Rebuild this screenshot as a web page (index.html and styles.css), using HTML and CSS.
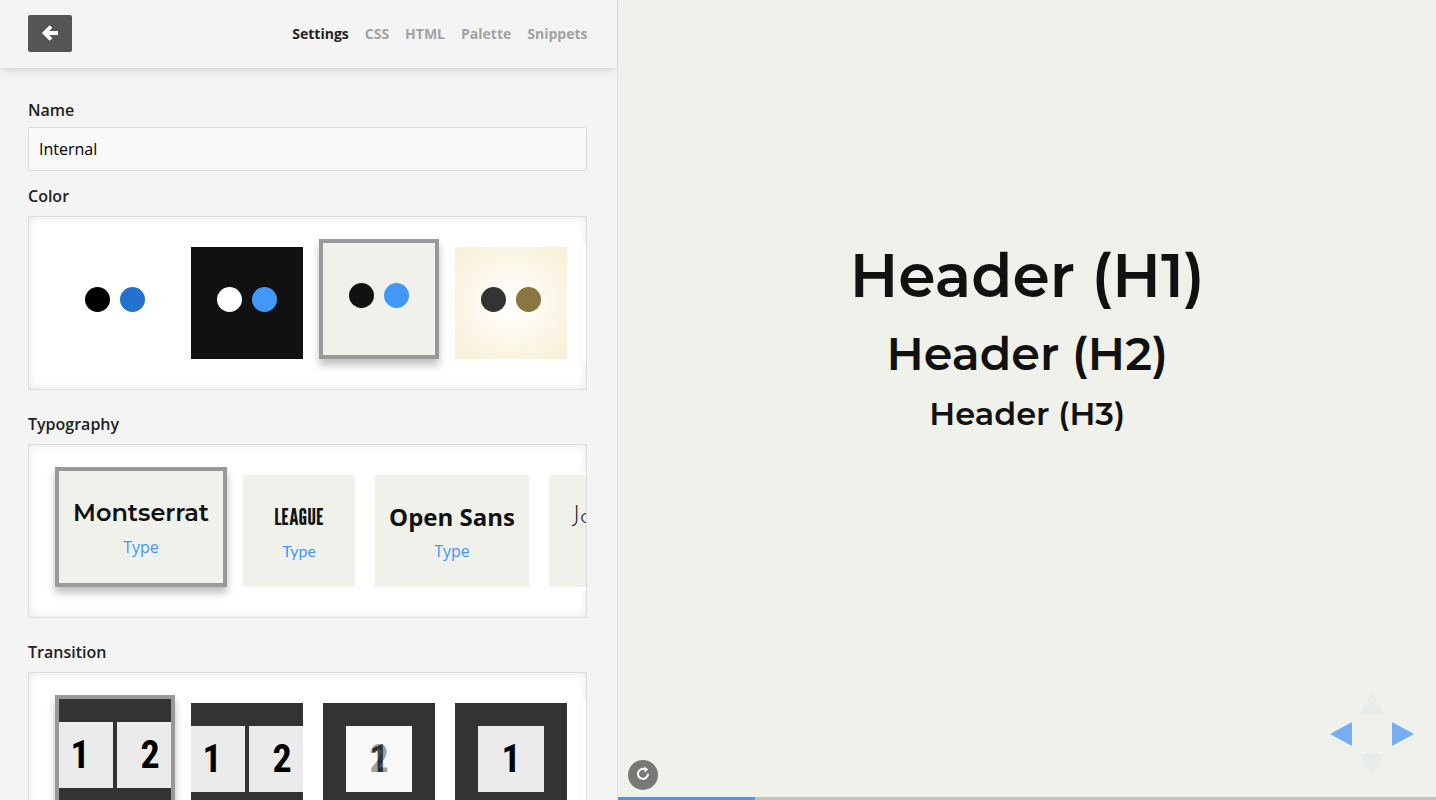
FILE: index.html
```html
<!DOCTYPE html>
<html lang="en">
<head>
    <meta charset="UTF-8">
    <meta name="viewport" content="width=device-width, initial-scale=1.0">
    <title>Theme editor</title>

    <link rel="stylesheet" href="styles.css">
</head>

<body>
    <div class="sidebar">
        <header class="toolbar">
            <button class="back" aria-label="Back">
                <svg width="16" height="16" viewBox="0 0 16 16"><path d="M9 .5 L2.6 7 L9 13.5 M4 7 H16" fill="none" stroke="#fff" stroke-width="3.8"/></svg>
            </button>
            <nav class="tabs">
                <a class="tab active" href="#settings">Settings</a>
                <a class="tab" href="#css">CSS</a>
                <a class="tab" href="#html">HTML</a>
                <a class="tab" href="#palette">Palette</a>
                <a class="tab" href="#snippets">Snippets</a>
            </nav>
        </header>

        <form class="settings">
            <label class="title" for="name">Name</label>
            <input class="name" id="name" type="text" value="Internal">

            <h4 class="title">Color</h4>
            <div class="options">
                <button type="button" class="option color white" aria-label="White and blue"><span class="dot"></span><span class="dot link"></span></button>
                <button type="button" class="option color black" aria-label="Black and blue"><span class="dot"></span><span class="dot link"></span></button>
                <button type="button" class="option color sand selected" aria-label="Sand and blue"><span class="dot"></span><span class="dot link"></span></button>
                <button type="button" class="option color beige" aria-label="Beige and brown"><span class="dot"></span><span class="dot link"></span></button>
                <button type="button" class="option color white" aria-label="White"></button>
            </div>

            <h4 class="title">Typography</h4>
            <div class="options">
                <button type="button" class="option type montserrat selected"><span class="face">Montserrat</span><span class="body">Type</span></button>
                <button type="button" class="option type league"><span class="face">LEAGUE</span><span class="body">Type</span></button>
                <button type="button" class="option type opensans"><span class="face">Open Sans</span><span class="body">Type</span></button>
                <button type="button" class="option type josefin"><span class="face">Josefin</span><span class="body">Type</span></button>
            </div>

            <h4 class="title">Transition</h4>
            <div class="options">
                <button type="button" class="option transition selected"><span class="page">1</span><span class="page">2</span></button>
                <button type="button" class="option transition"><span class="page">1</span><span class="page">2</span></button>
                <button type="button" class="option transition"><span class="page fade"><span>1</span><span>2</span></span></button>
                <button type="button" class="option transition"><span class="page">1</span></button>
                <button type="button" class="option color white" aria-label="More"></button>
            </div>
        </form>
    </div>

    <main class="preview">
        <div class="slide">
            <h1>Header (H1)</h1>
            <h2>Header (H2)</h2>
            <h3>Header (H3)</h3>
        </div>

        <div class="controls">
            <button class="up" aria-label="Up" disabled><svg width="24" height="22"><path d="M12 0 L24 22 H0 Z"/></svg></button>
            <button class="left" aria-label="Previous"><svg width="22" height="24"><path d="M0 12 L22 0 V24 Z"/></svg></button>
            <button class="right" aria-label="Next"><svg width="22" height="24"><path d="M22 12 L0 0 V24 Z"/></svg></button>
            <button class="down" aria-label="Down" disabled><svg width="24" height="22"><path d="M12 22 L0 0 H24 Z"/></svg></button>
        </div>

        <button class="reload" aria-label="Reload">
            <svg width="14" height="14" viewBox="0 0 14 14"><path d="M9 1.3 A5 5 0 1 0 12 5.8" fill="none" stroke="#fff" stroke-width="2"/><path d="M8.4 -1.6 L12.2 1.4 L8.6 4.4 Z" fill="#fff"/></svg>
        </button>
        <div class="progress"><div class="bar"></div></div>
    </main>
</body>
</html>
```
FILE: styles.css
```css
* {
    box-sizing: border-box;
}

body {
    display: flex;
    height: 100vh;
    margin: 0;
    overflow: hidden;
    font-family: "Open Sans", sans-serif;
    font-size: 16px;
    color: #222;
}

button {
    margin: 0;
    padding: 0;
    border: none;
    background: none;
    font: inherit;
    cursor: pointer;
}

svg {
    display: block;
    overflow: visible;
}

/* sidebar */
.sidebar {
    display: flex;
    flex-direction: column;
    width: calc(43% + 1px);
    background-color: #f4f4f4;
    border-right: 1px solid #e2e2e0;
}

.toolbar {
    display: flex;
    flex-shrink: 0;
    justify-content: space-between;
    align-items: center;
    height: 68px;
    padding: 0 30px 1px 28px;
    box-shadow: 0 0 10px rgba(0, 0, 0, 0.22);
    clip-path: inset(0 0 -14px 0);
}

.back {
    display: flex;
    justify-content: center;
    align-items: center;
    width: 44px;
    height: 37px;
    background-color: #555;
    border-radius: 2px;
}

.tabs {
    display: flex;
    gap: 16px;
}

.tab {
    font-size: 14px;
    font-weight: bold;
    line-height: 20px;
    color: #a2a2a2;
    text-decoration: none;
}

.tab.active {
    color: #222;
}

.settings {
    flex: 1;
    padding: 30px 30px 0 28px;
    overflow: hidden;
}

.title {
    display: block;
    margin: 0 0 8px;
    font-size: 16px;
    font-weight: 600;
    line-height: 24px;
}

label.title {
    margin-bottom: 5px;
}

.name {
    display: block;
    width: 100%;
    height: 44px;
    margin-bottom: 13px;
    padding: 0 10px;
    border: 1px solid #ddd;
    border-radius: 2px;
    background-color: #f9f9f9;
    font: inherit;
    color: #000;
}

.options {
    display: flex;
    gap: 12px;
    height: 174px;
    margin-bottom: 22px;
    padding: 26px;
    border: 1px solid #ddd;
    background-color: #fff;
    box-shadow: inset 0 0 10px rgba(0, 0, 0, 0.1);
    overflow: hidden;
}

.option {
    display: flex;
    flex-shrink: 0;
    justify-content: center;
    width: 120px;
    height: 120px;
    border: 4px solid #fff;
    overflow: hidden;
}

.option.selected {
    border-color: #999;
    box-shadow: 0 6px 8px rgba(0, 0, 0, 0.25);
    transform: translateY(-4px);
}

/* color */
.color {
    gap: 10px;
    padding-top: 40px;
}

.dot {
    width: 25px;
    height: 25px;
    border-radius: 50%;
    background-color: #000;
}

.dot.link {
    background-color: #4198f7;
}

.white {
    background-color: #fff;
}

.white .link {
    background-color: #2271cc;
}

.black {
    background-color: #111;
}

.black .dot:first-child {
    background-color: #fff;
}

.sand {
    background-color: #f0f1eb;
}

.sand .dot:first-child {
    background-color: #111;
}

.beige {
    background: radial-gradient(circle, #fff, #f7f0d5) padding-box;
}

.beige .dot:first-child {
    background-color: #333;
}

.beige .link {
    background-color: #8b7540;
}

/* typography */
.type {
    flex-direction: column;
    justify-content: flex-start;
    align-items: center;
    width: auto;
    min-width: 120px;
    padding: 24px 14px 0;
    background-color: #f0f1eb;
}

.face {
    font-size: 24px;
    line-height: 36px;
    color: #111;
}

.body {
    line-height: 24px;
    margin-top: 4px;
    color: #4198f7;
}

.montserrat .face {
    font-family: Montserrat, Inter, sans-serif;
    font-weight: 600;
}

.league .face {
    font-family: "League Gothic", Roboto, sans-serif;
}

.league .body {
    font-family: Lato, sans-serif;
}

.opensans .face {
    font-weight: bold;
}

.josefin .face {
    font-family: "Josefin Sans", Lato, sans-serif;
    font-weight: 300;
}

/* transition */
.transition {
    gap: 4px;
    align-items: center;
    background-color: #333;
}

.page {
    display: grid;
    flex-shrink: 0;
    place-items: center;
    width: 66px;
    height: 66px;
    background-color: #ebebeb;
    font-family: "Roboto Condensed", Roboto, sans-serif;
    font-size: 38px;
    font-weight: bold;
    color: #000;
}

.fade {
    background-color: #f8f8f8;
}

.fade span {
    grid-area: 1 / 1;
    opacity: 0.7;
}

.fade span:last-child {
    opacity: 0.35;
}

/* preview */
.preview {
    position: relative;
    display: flex;
    flex: 1;
    justify-content: center;
    align-items: center;
    background-color: #f0f1eb;
}

.slide {
    padding-bottom: 128px;
    font-family: Montserrat, Inter, sans-serif;
    text-align: center;
    color: #111;
}

.slide h1,
.slide h2,
.slide h3 {
    margin: 0;
    font-weight: 600;
}

.slide h1 {
    margin-bottom: 12px;
    font-size: 60px;
    line-height: 76px;
}

.slide h2 {
    margin-bottom: 12px;
    font-size: 46px;
    line-height: 56px;
}

.slide h3 {
    font-size: 32px;
    line-height: 40px;
}

.controls {
    position: absolute;
    right: 22px;
    bottom: 24px;
    display: grid;
    grid-template-columns: 22px 40px 22px;
    grid-template-rows: 22px 40px 22px;
    place-items: center;
}

.controls path {
    fill: #75aef3;
}

.controls button:disabled path {
    fill: #e7ebe9;
}

.up {
    grid-area: 1 / 2;
}

.left {
    grid-area: 2 / 1;
}

.right {
    grid-area: 2 / 3;
}

.down {
    grid-area: 3 / 2;
}

.reload {
    position: absolute;
    left: 10px;
    bottom: 10px;
    display: flex;
    justify-content: center;
    align-items: center;
    width: 30px;
    height: 30px;
    border-radius: 50%;
    background-color: #787976;
}

.progress {
    position: absolute;
    left: 0;
    right: 0;
    bottom: 0;
    height: 3px;
    background-color: #c0c1bc;
}

.bar {
    width: 16.7%;
    height: 100%;
    background-color: #4198f7;
}
```
